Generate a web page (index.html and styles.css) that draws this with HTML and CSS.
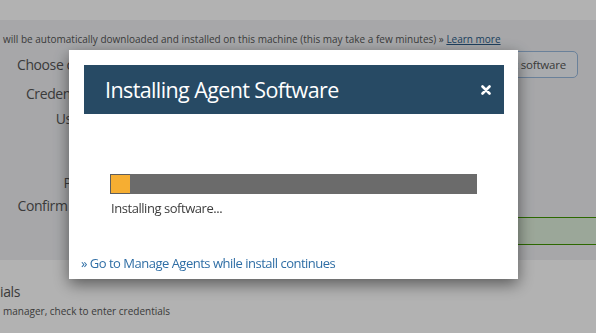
FILE: index.html
```html
<!DOCTYPE html>
<html lang="en">
<head>
    <meta charset="UTF-8">
    <meta name="viewport" content="width=device-width, initial-scale=1.0">
    <title>Installing Agent Software</title>
    <link rel="stylesheet" href="styles.css">
</head>
<body>
    <div class="page">
        <div class="top-band">
            <a href="#" class="top-link">Learn more</a>
        </div>
        <div class="panel">
            <p class="notice">will be automatically downloaded and installed on this machine (this may take a few minutes) &raquo; <a href="#">Learn more</a></p>
            <div class="form-row row-choose">
                <label class="form-label">Choose credentials</label>
                <button class="btn-outline">Download agent software</button>
            </div>
            <div class="form-row row-type">
                <label class="form-label">Credential source</label>
            </div>
            <div class="form-row row-user">
                <label class="form-label">User name *</label>
            </div>
            <div class="form-row row-pass">
                <label class="form-label">Password *</label>
            </div>
            <div class="form-row row-confirm">
                <label class="form-label">Confirm password:</label>
            </div>
            <div class="success-box">Credentials verified</div>
        </div>
        <div class="section">
            <h4 class="section-title">ials</h4>
            <p class="section-hint">manager, check to enter credentials</p>
        </div>
    </div>

    <div class="overlay"></div>
    <div class="modal">
        <div class="modal-header">
            <h3>Installing Agent Software</h3>
            <span class="close-modal">
                <svg width="10" height="10" viewBox="0 0 10 10">
                    <path d="M1.5 1.5 L8.5 8.5 M8.5 1.5 L1.5 8.5" stroke="#fff" stroke-width="2.6" stroke-linecap="round"/>
                </svg>
            </span>
        </div>
        <div class="modal-body">
            <div class="progress">
                <div class="progress-fill"></div>
            </div>
            <p class="progress-text">Installing software...</p>
        </div>
        <a href="#" class="modal-link">&raquo; Go to Manage Agents while install continues</a>
    </div>
</body>
</html>
```

FILE: styles.css
```css
body {
    margin: 0;
    font-family: 'Open Sans', 'Noto Sans', sans-serif;
    color: #555;
    background: #fff;
    overflow: hidden;
}

.page {
    width: 596px;
}

.top-band {
    height: 20px;
    background: #fff;
    overflow: hidden;
}

.top-link {
    display: block;
    margin-top: -15px;
    font-size: 11px;
    color: #2a5a87;
    width: 9px;
    overflow: hidden;
    white-space: nowrap;
}

.panel {
    height: 240px;
    background: #eff0f3;
    overflow: hidden;
}

.notice {
    margin: 12px 0 0 3px;
    font-size: 10px;
    line-height: 14px;
    white-space: nowrap;
    color: #555;
}

.notice a {
    color: #2a5a87;
}

.form-row {
    display: flex;
    align-items: center;
}

.form-label {
    width: 134px;
    text-align: right;
    font-size: 14px;
    line-height: 20px;
    letter-spacing: -0.4px;
    white-space: nowrap;
    color: #555;
}

.row-choose {
    margin-top: 5px;
    justify-content: space-between;
    padding-right: 18px;
}

.row-type {
    margin-top: 6px;
}

.row-user {
    margin-top: 5px;
}

.row-pass {
    margin-top: 44px;
}

.row-confirm {
    margin-top: 3px;
}

.btn-outline {
    height: 27px;
    padding: 0 11px 0 14px;
    background: #f2f5f9;
    border: 1px solid #99b9dd;
    border-radius: 5px;
    font-family: 'Open Sans', sans-serif;
    font-size: 11.5px;
    letter-spacing: -0.2px;
    color: #555;
}

.success-box {
    margin: 1px 0 0 300px;
    height: 26px;
    border-top: 1px solid #3f9600;
    border-bottom: 1px solid #3f9600;
    background: #dfefdb;
    color: #3c763d;
    font-size: 12px;
    line-height: 26px;
    padding-left: 10px;
}

.section {
    padding-top: 22px;
}

.section-title {
    margin: 0;
    font-size: 14px;
    font-weight: 400;
    line-height: 20px;
    letter-spacing: -0.4px;
    color: #555;
}

.section-hint {
    margin: 2px 0 0 3px;
    font-size: 10px;
    line-height: 14px;
    color: #555;
}

/* Modal for install progress */
.overlay {
    position: fixed;
    top: 0;
    left: 0;
    width: 100%;
    height: 100%;
    background: rgba(0, 0, 0, 0.3);
}

.modal {
    position: fixed;
    top: 50px;
    left: 69px;
    width: 449px;
    height: 229px;
    box-sizing: border-box;
    padding: 15px 14px 0 15px;
    background: #fff;
    box-shadow: 0 5px 15px rgba(0, 0, 0, 0.5);
}

.modal-header {
    height: 49px;
    background: #274a64;
    display: flex;
    align-items: center;
    justify-content: space-between;
    padding: 0 13px 0 21px;
}

.modal-header h3 {
    margin: 0;
    font-size: 21.5px;
    font-weight: 400;
    letter-spacing: -0.6px;
    color: #fff;
    line-height: 30px;
}

.close-modal {
    display: flex;
    cursor: pointer;
}

.modal-body {
    padding: 60px 27px 0 26px;
}

.progress {
    height: 20px;
    background: #6b6b6b;
}

.progress-fill {
    width: 20px;
    height: 20px;
    box-sizing: border-box;
    background: #f6ae32;
    border: 1px solid #5e5e5e;
    border-right: none;
}

.progress-text {
    margin: 5px 0 0 1px;
    font-size: 13px;
    line-height: 18px;
    letter-spacing: -0.45px;
    color: #3d3d3d;
}

.modal-link {
    display: block;
    margin: 37px 0 0 -3px;
    font-size: 13px;
    line-height: 18px;
    letter-spacing: -0.5px;
    color: #2f6ea5;
    text-decoration: none;
}
```
